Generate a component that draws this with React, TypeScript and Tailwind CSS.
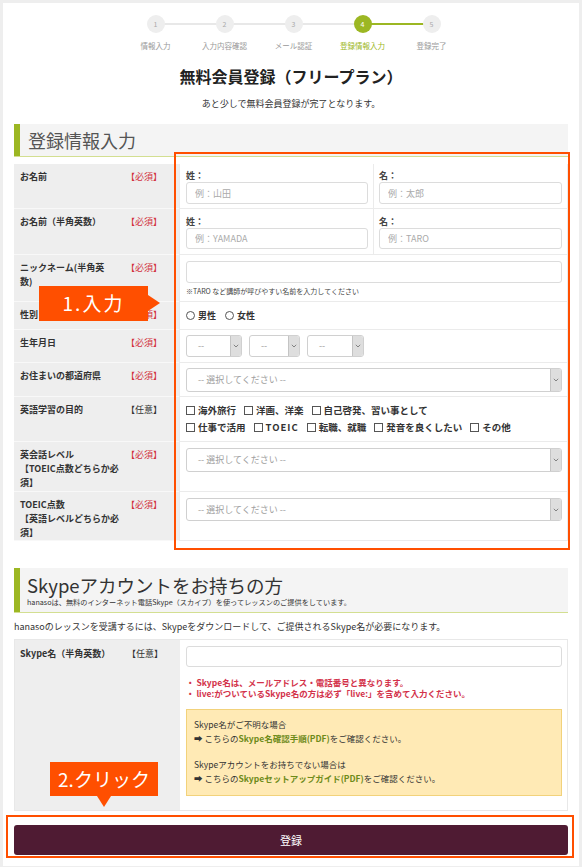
import React from "react";

const steps = ["情報入力", "入力内容確認", "メール認証", "登録情報入力", "登録完了"];
const purposes1 = ["海外旅行", "洋画、洋楽", "自己啓発、習い事として"];
const purposes2 = ["仕事で活用", "TOEIC", "転職、就職", "発音を良くしたい", "その他"];

function Label({ children, opt }: { children: React.ReactNode; opt?: boolean }) {
  return (
    <div className="flex w-[165px] shrink-0 justify-between border-b border-[#f8f8f8] bg-[#eee] pl-[6px] pr-[17px] pt-[6px] text-[9px] leading-[14px]">
      <span className="font-bold text-[#333]">{children}</span>
      {opt ? (
        <span className="shrink-0 text-[#333]">【任意】</span>
      ) : (
        <span className="shrink-0 text-[#d2313d]">【必須】</span>
      )}
    </div>
  );
}

function Row({ className, label, opt, children }: { className: string; label: React.ReactNode; opt?: boolean; children: React.ReactNode }) {
  return (
    <div className={"flex " + className}>
      <Label opt={opt}>{label}</Label>
      <div className="flex-1 border-b border-l border-[#ebebeb]">{children}</div>
    </div>
  );
}

function TextInput({ placeholder, className }: { placeholder?: string; className: string }) {
  return (
    <input
      readOnly
      placeholder={placeholder}
      className={"block w-full rounded-[3px] border border-[#dcdcdc] bg-white pl-[8px] text-[9px] text-[#333] outline-none placeholder:text-[#aaa] " + className}
    />
  );
}

function Chevron() {
  return (
    <svg width="6" height="4" viewBox="0 0 6 4" fill="none">
      <path d="M0.8 0.8L3 3L5.2 0.8" stroke="#777" strokeWidth="0.9" />
    </svg>
  );
}

function FakeSelect({ text, className }: { text: string; className: string }) {
  return (
    <div className={"flex items-stretch overflow-hidden rounded-[3px] border border-[#d0d0d0] bg-white " + className}>
      <div className="flex flex-1 items-center pl-[11px] text-[9px] text-[#a0a0a0]">{text}</div>
      <div className="flex w-[11px] items-center justify-center border-l border-[#c4c4c4] bg-[#dedede]">
        <Chevron />
      </div>
    </div>
  );
}

function Box({ label }: { label: string }) {
  return (
    <span className="flex items-center gap-[3px]">
      <span className="inline-block h-[9px] w-[9px] border border-[#555] bg-white" />
      <span className={"font-bold text-[#333] " + (label === "TOEIC" ? "tracking-[1px]" : "")}>{label}</span>
    </span>
  );
}

function Radio({ label }: { label: string }) {
  return (
    <span className="flex items-center gap-[3px]">
      <span className="inline-block h-[9px] w-[9px] rounded-full border border-[#555] bg-white" />
      <span className="font-bold text-[#333]">{label}</span>
    </span>
  );
}

export default function App() {
  return (
    <div className="min-h-[867px] bg-[#eee] p-[3px] font-['Noto_Sans_CJK_JP','Noto_Sans',sans-serif] text-[#333]">
      <div className="relative bg-white px-[11px] pb-[11px] pt-[12px]">
        {/* steps */}
        <div className="flex justify-center pl-[5px]">
          {steps.map((s, i) => (
            <div key={s} className="flex w-[69px] flex-col items-center">
              <div className="relative flex h-[18px] w-full justify-center">
                {i > 0 && <div className={"absolute left-0 top-[8px] h-[2px] w-1/2 " + (i === 4 ? "bg-[#9cb723]" : "bg-[#e8e8e8]")} />}
                {i < 4 && <div className={"absolute right-0 top-[8px] h-[2px] w-1/2 " + (i === 3 ? "bg-[#9cb723]" : "bg-[#e8e8e8]")} />}
                <div className={"relative flex h-[18px] w-[18px] items-center justify-center rounded-full text-[7px] " + (i === 3 ? "bg-[#9cb723] text-white" : "bg-[#eee] text-[#aaa]")}>
                  {i + 1}
                </div>
              </div>
              <div className={"mt-[8px] text-[7.5px] leading-[10px] " + (i === 3 ? "text-[#9cb723]" : "text-[#999]")}>{s}</div>
            </div>
          ))}
        </div>

        <h1 className="mt-[14px] text-center text-[16px] font-bold leading-[22px] text-[#222]">無料会員登録（フリープラン）</h1>
        <p className="mt-[11px] text-center text-[9px] leading-[12px] text-[#333]">あと少しで無料会員登録が完了となります。</p>

        {/* section 1 */}
        <div className="mt-[14px] flex h-[33px] border-b border-[#d3df91] bg-[#f4f4f4]">
          <div className="w-[6px] bg-[#9cb723]" />
          <div className="flex items-center pl-[8px] text-[18px] text-[#555]">登録情報入力</div>
        </div>

        <div className="mt-[7px] border-r border-[#ebebeb] text-[9px]">
          <Row className="h-[45px]" label="お名前">
            <div className="flex h-full">
              <div className="w-[194px] border-r border-[#ebebeb] pl-[6px] pr-[5px] pt-[6px]">
                <div className="font-bold leading-[12px] text-[#444]">姓：</div>
                <TextInput placeholder="例：山田" className="h-[22px]" />
              </div>
              <div className="flex-1 pl-[5px] pr-[5px] pt-[6px]">
                <div className="font-bold leading-[12px] text-[#444]">名：</div>
                <TextInput placeholder="例：太郎" className="h-[22px]" />
              </div>
            </div>
          </Row>
          <Row className="h-[46px]" label="お名前（半角英数）">
            <div className="flex h-full">
              <div className="w-[194px] border-r border-[#ebebeb] pl-[6px] pr-[5px] pt-[7px]">
                <div className="font-bold leading-[12px] text-[#444]">姓：</div>
                <TextInput placeholder="例：YAMADA" className="h-[21px]" />
              </div>
              <div className="flex-1 pl-[5px] pr-[5px] pt-[7px]">
                <div className="font-bold leading-[12px] text-[#444]">名：</div>
                <TextInput placeholder="例：TARO" className="h-[21px]" />
              </div>
            </div>
          </Row>
          <Row className="h-[47px]" label={<>ニックネーム(半角英<br />数)</>}>
            <div className="pl-[6px] pr-[5px] pt-[6px]">
              <TextInput className="h-[22px]" />
              <div className="mt-[3px] text-[7px] leading-[10px] text-[#444]">※TARO など講師が呼びやすい名前を入力してください</div>
            </div>
          </Row>
          <Row className="h-[28px]" label="性別">
            <div className="flex h-full items-center gap-[9px] pl-[6px]">
              <Radio label="男性" />
              <Radio label="女性" />
            </div>
          </Row>
          <Row className="h-[33px]" label="生年月日">
            <div className="flex gap-[7px] pl-[6px] pt-[5px]">
              <FakeSelect text="--" className="h-[22px] w-[56px]" />
              <FakeSelect text="--" className="h-[22px] w-[51px]" />
              <FakeSelect text="--" className="h-[22px] w-[57px]" />
            </div>
          </Row>
          <Row className="h-[34px]" label="お住まいの都道府県">
            <div className="pl-[6px] pr-[5px] pt-[5px]">
              <FakeSelect text="-- 選択してください --" className="h-[24px] w-full" />
            </div>
          </Row>
          <Row className="h-[45px]" label="英語学習の目的" opt>
            <div className="pl-[6px] pt-[5px] text-[9.5px] leading-[17px]">
              <div className="flex gap-[8px]">
                {purposes1.map((p) => (
                  <Box key={p} label={p} />
                ))}
              </div>
              <div className="flex gap-[8px]">
                {purposes2.map((p) => (
                  <Box key={p} label={p} />
                ))}
              </div>
            </div>
          </Row>
          <Row className="h-[50px]" label={<>英会話レベル<br />【TOEIC点数どちらか必<br />須】</>}>
            <div className="pl-[6px] pr-[5px] pt-[6px]">
              <FakeSelect text="-- 選択してください --" className="h-[24px] w-full" />
            </div>
          </Row>
          <Row className="h-[49px]" label={<>TOEIC点数<br />【英語レベルどちらか必<br />須】</>}>
            <div className="pl-[6px] pr-[5px] pt-[6px]">
              <FakeSelect text="-- 選択してください --" className="h-[23px] w-full" />
            </div>
          </Row>
        </div>

        {/* section 2 */}
        <div className="mt-[27px] flex h-[45px] border-b border-[#d3df91] bg-[#f4f4f4]">
          <div className="w-[6px] bg-[#9cb723]" />
          <div className="pl-[7px] pt-[6px]">
            <div className="text-[18.5px] leading-[22px] text-[#333]">Skypeアカウントをお持ちの方</div>
            <div className="mt-[1px] text-[7.2px] leading-[10px] text-[#333]">hanasoは、無料のインターネット電話Skype（スカイプ）を使ってレッスンのご提供をしています。</div>
          </div>
        </div>
        <p className="mt-[7px] text-[9px] leading-[13px] text-[#333]">hanasoのレッスンを受講するには、Skypeをダウンロードして、ご提供されるSkype名が必要になります。</p>

        <div className="mt-[6px] flex border border-[#e8e8e8]">
          <div className="flex w-[165px] shrink-0 justify-between bg-[#eee] pl-[5px] pr-[17px] pt-[7px] text-[9px] leading-[14px]">
            <span className="font-bold text-[#333]">Skype名（半角英数）</span>
            <span className="text-[#333]">【任意】</span>
          </div>
          <div className="flex-1 pb-[14px] pl-[6px] pr-[5px] pt-[6px]">
            <TextInput className="h-[21px]" />
            <div className="mt-[10px] text-[8.5px] font-bold leading-[11px] text-[#d3324a]">
              <div>・ Skype名は、メールアドレス・電話番号と異なります。</div>
              <div>・ live:がついているSkype名の方は必ず「live:」を含めて入力ください。</div>
            </div>
            <div className="mt-[10px] border border-[#f2d27b] bg-[#ffeab5] pb-[10px] pl-[7px] pt-[7px] text-[8.5px] leading-[14px] text-[#333]">
              <div>Skype名がご不明な場合</div>
              <div>
                ➡ こちらの<span className="font-bold text-[#6e8b1a]">Skype名確認手順(PDF)</span>をご確認ください。
              </div>
              <div className="mt-[12px]">Skypeアカウントをお持ちでない場合は</div>
              <div>
                ➡ こちらの<span className="font-bold text-[#6e8b1a]">Skypeセットアップガイド(PDF)</span>をご確認ください。
              </div>
            </div>
          </div>
        </div>

        <button className="mt-[14px] flex h-[30px] w-full items-center justify-center rounded-[3px] bg-[#4f1b33] text-[11px] text-white">登録</button>

        {/* annotations */}
        <div className="pointer-events-none absolute left-[171px] top-[149px] h-[398px] w-[396px] border-2 border-[#ff4f00]" />
        <div className="pointer-events-none absolute left-[3px] top-[812px] h-[43px] w-[568px] border-2 border-[#ff4f00]" />

        <div className="absolute left-[36px] top-[283px] flex h-[35px] w-[109px] items-center justify-center bg-[#ff4f00] text-[19px] tracking-[2px] text-white">
          1.入力
          <div className="absolute left-full top-[9px] h-0 w-0 border-y-[8px] border-l-[12px] border-y-transparent border-l-[#ff4f00]" />
        </div>
        <div className="absolute left-[47px] top-[759px] flex h-[34px] w-[108px] items-center justify-center bg-[#ff4f00] text-[19px] text-white">
          2.クリック
          <div className="absolute left-[47px] top-full h-0 w-0 border-x-[7px] border-t-[11px] border-x-transparent border-t-[#ff4f00]" />
        </div>
      </div>
    </div>
  );
}
